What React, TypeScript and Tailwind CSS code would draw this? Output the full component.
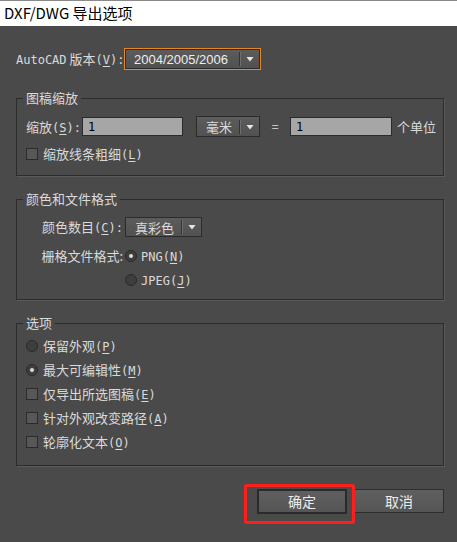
import type { ReactNode } from "react";

// mnemonic like (S) drawn in the half-width latin face
function Mn({ k, colon = false }: { k: string; colon?: boolean }) {
  return (
    <span className="font-['DejaVu_Sans_Mono'] text-[12px]">
      (<u className="underline-offset-2">{k}</u>){colon ? ":" : ""}
    </span>
  );
}

function Lat({ children }: { children: ReactNode }) {
  return <span className="font-['DejaVu_Sans_Mono'] text-[12px]">{children}</span>;
}

function Group({ title, className, children }: { title: string; className: string; children: ReactNode }) {
  return (
    <div className={`relative border border-[#2c2c2c] shadow-[1px_1px_0_#5a5a5a] ${className}`}>
      <span className="absolute -top-[10px] left-[6px] bg-[#4a4a4a] px-[3px] leading-[18px] text-[13px]">
        {title}
      </span>
      {children}
    </div>
  );
}

function Arrow() {
  return (
    <div className="flex h-full items-center">
      <div className="h-[14px] w-px bg-[#333] shadow-[1px_0_0_#6e6e6e]" />
      <svg width="18" height="10" viewBox="0 0 18 10" className="ml-[1px]">
        <path d="M5.5 3 H12.5 L9 7.5 Z" fill="#e6e6e6" />
      </svg>
    </div>
  );
}

function Dropdown({ value, w, h, cls = "" }: { value: string; w: string; h: string; cls?: string }) {
  return (
    <div
      className={`flex items-center justify-between border border-[#2b2b2b] bg-gradient-to-b from-[#5c5c5c] to-[#515151] pl-[9px] ${w} ${h} ${cls}`}
    >
      <span className="leading-none">{value}</span>
      <Arrow />
    </div>
  );
}

function Check() {
  return <div className="h-[12px] w-[12px] shrink-0 border border-[#2a2a2a] bg-[#575757]" />;
}

function Radio({ on = false }: { on?: boolean }) {
  return (
    <div className="flex h-[12px] w-[12px] shrink-0 items-center justify-center rounded-full border border-[#2a2a2a] bg-[#3e3e3e]">
      {on && <div className="h-[4px] w-[4px] rounded-full bg-[#dcdcdc]" />}
    </div>
  );
}

function Field({ w }: { w: string }) {
  return (
    <div className={`flex h-[19px] items-center border border-[#2b2b2b] bg-[#a6a6a6] pl-[5px] text-black ${w}`}>
      <Lat>1</Lat>
    </div>
  );
}

function Btn({ label, primary = false }: { label: string; primary?: boolean }) {
  return (
    <div
      className={`flex w-[90px] items-center justify-center bg-gradient-to-b from-[#5f5f5f] to-[#555] text-[14px] text-[#ececec] ${
        primary ? "h-[25px] border-2 border-[#2a2a2a]" : "h-[24px] border border-[#2e2e2e]"
      }`}
    >
      {label}
    </div>
  );
}

export default function App() {
  const options: { kind: "radio" | "check"; on?: boolean; label: string; k: string }[] = [
    { kind: "radio", label: "保留外观", k: "P" },
    { kind: "radio", on: true, label: "最大可编辑性", k: "M" },
    { kind: "check", label: "仅导出所选图稿", k: "E" },
    { kind: "check", label: "针对外观改变路径", k: "A" },
    { kind: "check", label: "轮廓化文本", k: "O" },
  ];

  return (
    <div className="h-[542px] w-[457px] overflow-hidden bg-[#4a4a4a] font-['Noto_Sans_CJK_SC',sans-serif] text-[13px] text-[#dadada]">
      {/* title bar */}
      <div className="flex h-[26px] items-center border-t border-[#8a8a8a] bg-white pl-[4px] text-[15px] text-black">
        DXF/DWG 导出选项
      </div>

      <div className="pl-[16px] pr-[13px] pt-[22px]">
        {/* version */}
        <div className="flex h-[22px] items-center">
          <span className="w-[108px] whitespace-nowrap">
            <Lat>AutoCAD</Lat> 版本<Mn k="V" colon />
          </span>
          <div className="h-[22px] w-[137px] border border-[#e4881f]">
            <div className="flex h-full items-center justify-between border border-[#2b2b2b] bg-gradient-to-b from-[#5c5c5c] to-[#515151] pl-[8px] font-['Liberation_Sans'] text-[13px] text-[#eeeeee]">
              <span className="leading-none">2004/2005/2006</span>
              <Arrow />
            </div>
          </div>
        </div>

        {/* scale */}
        <Group title="图稿缩放" className="mt-[28px] pb-[13px] pl-[9px] pt-[17px]">
          <div className="flex h-[21px] items-center">
            <span className="w-[56px] whitespace-nowrap">
              缩放<Mn k="S" colon />
            </span>
            <Field w="w-[101px]" />
            <Dropdown value="毫米" w="w-[64px]" h="h-[21px]" cls="ml-[13px]" />
            <span className="w-[30px] text-center">=</span>
            <Field w="w-[102px]" />
            <span className="ml-[5px]">个单位</span>
          </div>
          <div className="mt-[9px] flex h-[16px] items-center gap-[5px]">
            <Check />
            <span>
              缩放线条粗细<Mn k="L" />
            </span>
          </div>
        </Group>

        {/* colour & format */}
        <Group title="颜色和文件格式" className="mt-[23px] pb-[7px] pl-[9px] pt-[17px]">
          <div className="flex h-[20px] items-center">
            <span className="w-[97px] whitespace-nowrap text-right">
              颜色数目<Mn k="C" colon />
            </span>
            <Dropdown value="真彩色" w="w-[77px]" h="h-[20px]" cls="ml-[2px] pl-[7px]" />
          </div>
          <div className="mt-[7px] flex h-[24px] items-center">
            <span className="w-[97px] text-right">栅格文件格式:</span>
            <div className="ml-[2px] flex items-center gap-[4px]">
              <Radio on />
              <span>
                <Lat>PNG</Lat>
                <Mn k="N" />
              </span>
            </div>
          </div>
          <div className="flex h-[24px] items-center pl-[99px]">
            <div className="flex items-center gap-[4px]">
              <Radio />
              <span>
                <Lat>JPEG</Lat>
                <Mn k="J" />
              </span>
            </div>
          </div>
        </Group>

        {/* options */}
        <Group title="选项" className="mt-[23px] pb-[11px] pl-[9px] pt-[10px]">
          {options.map((o) => (
            <div key={o.k} className="flex h-[24px] items-center gap-[5px]">
              {o.kind === "radio" ? <Radio on={o.on} /> : <Check />}
              <span>
                {o.label}
                <Mn k={o.k} />
              </span>
            </div>
          ))}
        </Group>

        {/* buttons */}
        <div className="mt-[23px] flex items-start justify-end gap-[7px]">
          <div className="relative">
            <Btn label="确定" primary />
            <div className="absolute -left-[13px] -top-[5px] h-[40px] w-[111px] rounded-[3px] border-[3px] border-[#ff1f1a]" />
          </div>
          <Btn label="取消" />
        </div>
      </div>
    </div>
  );
}
